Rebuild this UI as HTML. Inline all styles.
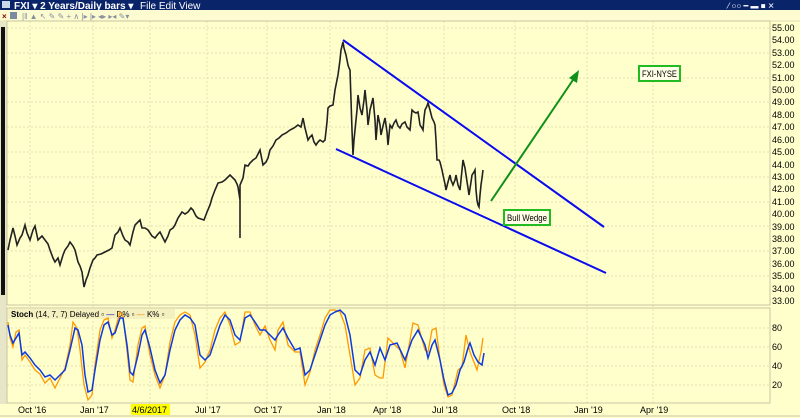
<!DOCTYPE html>
<html><head><meta charset="utf-8"><style>
html,body{margin:0;padding:0;width:800px;height:418px;overflow:hidden;background:#ffffcc;font-family:"Liberation Sans",sans-serif;}
</style></head><body>
<svg width="800" height="418" xmlns="http://www.w3.org/2000/svg" style="position:absolute;left:0;top:0" font-family="Liberation Sans, sans-serif">
<rect x="0" y="0" width="800" height="418" fill="#ffffcc"/>
<rect x="0" y="0" width="800" height="10" fill="#0a246a"/>
<rect x="2" y="1" width="8" height="7" fill="#c8d8e8"/>
<text x="14" y="9" font-size="10" fill="#fff" font-weight="bold">FXI ▾  2 Years/Daily bars ▾</text>
<text x="140" y="9" font-size="10" fill="#fff">File  Edit  View</text>
<text x="728" y="8.5" font-size="8" fill="#fff">⁄ ○○ ━ ▬ ■ ✕</text>
<rect x="0" y="10" width="800" height="11" fill="#fdfbd0"/>
<text x="2" y="19" font-size="8" fill="#880000" font-weight="bold">×</text>
<rect x="10" y="12" width="7" height="7" fill="#7a8aa0"/>
<text x="22" y="19" font-size="8" fill="#8890a0">|‖ ▲ ↖ ✎ ✎ + ∧ |▸ |▸ ◂▸ ▸◂ ✎▾</text>
<line x1="0" y1="21" x2="800" y2="21" stroke="#e0dcb0"/>
<rect x="0" y="21" width="7" height="397" fill="#e8e6c8"/>
<rect x="1" y="27" width="4" height="268" fill="#111"/>
<g stroke="#e4e0b4" stroke-dasharray="2,2" stroke-width="1">
<line x1="7" y1="28" x2="770" y2="28"/><line x1="7" y1="53" x2="770" y2="53"/><line x1="7" y1="78" x2="770" y2="78"/><line x1="7" y1="102" x2="770" y2="102"/><line x1="7" y1="127" x2="770" y2="127"/><line x1="7" y1="152" x2="770" y2="152"/><line x1="7" y1="177" x2="770" y2="177"/><line x1="7" y1="202" x2="770" y2="202"/><line x1="7" y1="226" x2="770" y2="226"/><line x1="7" y1="251" x2="770" y2="251"/><line x1="7" y1="276" x2="770" y2="276"/>
<line x1="30" y1="21" x2="30" y2="403"/><line x1="93" y1="21" x2="93" y2="403"/><line x1="150" y1="21" x2="150" y2="403"/><line x1="207" y1="21" x2="207" y2="403"/><line x1="267" y1="21" x2="267" y2="403"/><line x1="330" y1="21" x2="330" y2="403"/><line x1="387" y1="21" x2="387" y2="403"/><line x1="444" y1="21" x2="444" y2="403"/><line x1="515" y1="21" x2="515" y2="403"/><line x1="587" y1="21" x2="587" y2="403"/><line x1="653" y1="21" x2="653" y2="403"/>
<line x1="7" y1="328" x2="770" y2="328"/><line x1="7" y1="347" x2="770" y2="347"/><line x1="7" y1="366" x2="770" y2="366"/><line x1="7" y1="385" x2="770" y2="385"/>
</g>
<rect x="7" y="21" width="763" height="284" fill="none" stroke="#c8c4a0"/>
<rect x="7" y="308" width="763" height="95" fill="none" stroke="#c8c4a0"/>
<rect x="0" y="404" width="800" height="14" fill="#ffffcc"/>
<line x1="0" y1="416" x2="800" y2="416" stroke="#c8c4a0"/>
<g font-size="9" fill="#000">
<text x="772" y="31">55.00</text><text x="772" y="43">54.00</text><text x="772" y="56">53.00</text><text x="772" y="68">52.00</text><text x="772" y="81">51.00</text><text x="772" y="93">50.00</text><text x="772" y="105">49.00</text><text x="772" y="118">48.00</text><text x="772" y="130">47.00</text><text x="772" y="143">46.00</text><text x="772" y="155">45.00</text><text x="772" y="168">44.00</text><text x="772" y="180">43.00</text><text x="772" y="192">42.00</text><text x="772" y="205">41.00</text><text x="772" y="217">40.00</text><text x="772" y="230">39.00</text><text x="772" y="242">38.00</text><text x="772" y="254">37.00</text><text x="772" y="267">36.00</text><text x="772" y="279">35.00</text><text x="772" y="292">34.00</text><text x="772" y="304">33.00</text>
<text x="772" y="331">80</text><text x="772" y="350">60</text><text x="772" y="369">40</text><text x="772" y="388">20</text>
<text x="18" y="413">Oct '16</text><text x="80" y="413">Jan '17</text>
<rect x="131" y="404" width="39" height="11" fill="#ffff00"/><text x="132" y="413">4/6/2017</text>
<text x="195" y="413">Jul '17</text><text x="254" y="413">Oct '17</text><text x="317" y="413">Jan '18</text><text x="373" y="413">Apr '18</text><text x="432" y="413">Jul '18</text><text x="502" y="413">Oct '18</text><text x="574" y="413">Jan '19</text><text x="640" y="413">Apr '19</text>
</g>
<polyline fill="none" stroke="#222" stroke-width="1.6" points="8,250 10,240 13,228 15,236 17,245 20,238 22,235 25,225 27,233 30,240 33,230 35,226 38,240 42,236 45,240 48,244 50,250 53,258 55,262 58,258 60,265 63,255 65,250 68,246 70,242 73,246 75,250 78,262 80,266 82,272 84,287 86,280 88,275 90,268 93,260 95,258 97,255 101,254 105,252 109,250 112,248 115,235 118,232 120,228 123,236 125,240 128,242 130,245 133,232 135,225 138,222 140,220 142,228 145,228 148,230 152,236 155,238 158,234 160,232 163,238 165,242 168,236 170,230 173,228 175,225 178,218 182,212 185,214 188,212 191,208 193,210 196,216 198,218 201,219 204,220 207,212 210,205 212,198 215,190 218,183 222,182 225,180 228,177 230,175 233,178 235,180 237,184 238,187 240,200 240,238 240,185 243,178 245,165 248,166 250,163 253,160 256,158 258,154 260,150 262,160 263,165 266,162 268,158 270,150 273,146 276,140 279,138 282,135 286,133 290,130 294,128 298,125 301,127 303,118 305,128 308,140 310,137 312,135 314,142 316,145 318,142 320,140 323,142 325,140 327,122 328,108 330,106 333,105 335,90 338,75 340,60 341,50 343,42 344,48 346,55 347,60 348,65 349,68 350,70 351,100 352,130 353,155 354,140 355,130 357,110 358,95 360,108 362,115 364,100 365,90 367,110 368,125 369,118 370,110 372,102 373,98 375,120 376,140 377,128 378,115 380,125 381,135 383,126 385,118 387,132 388,145 389,135 390,125 392,128 394,123 396,120 398,126 400,128 402,124 405,122 407,127 410,130 411,120 412,110 414,112 416,113 418,112 419,118 420,125 422,128 423,130 424,118 425,110 427,106 428,103 430,110 432,118 434,122 435,125 436,140 437,160 439,160 440,162 442,170 443,175 445,184 446,190 448,182 450,175 451,180 453,185 455,180 456,175 458,185 460,190 462,170 463,160 465,168 466,175 468,188 469,195 471,182 472,175 474,172 475,170 476,190 477,200 478,205 479,207 480,195 481,185 482,178 483,170"/>
<line x1="343" y1="40" x2="604" y2="227" stroke="#0a0aee" stroke-width="2"/>
<line x1="336" y1="149" x2="606" y2="273" stroke="#0a0aee" stroke-width="2"/>
<line x1="491" y1="201" x2="575" y2="77" stroke="#10901a" stroke-width="2"/>
<polygon points="579,70 569,78 577,83" fill="#10901a"/>
<rect x="504" y="210" width="46" height="15" fill="#ffffe8" stroke="#22bb22" stroke-width="2"/>
<text x="507" y="221" font-size="9" fill="#000" textLength="40" lengthAdjust="spacingAndGlyphs">Bull Wedge</text>
<rect x="639" y="66" width="41" height="15" fill="#ffffe8" stroke="#22bb22" stroke-width="2"/>
<text x="642" y="77" font-size="9" fill="#000" textLength="35" lengthAdjust="spacingAndGlyphs">FXI-NYSE</text>
<rect x="8" y="309" width="167" height="10" fill="#f4f0c0"/>
<text x="11" y="317" font-size="8" fill="#000"><tspan font-weight="bold">Stoch</tspan>  (14, 7, 7) Delayed ▫  <tspan fill="#0000cc">—</tspan> D% ▫  <tspan fill="#ff8800">—</tspan> K% ▫</text>
<polyline fill="none" stroke="#ff9900" stroke-width="1.3" points="8,322 10,338 13,347 16,332 19,330 22,360 25,355 30,362 35,370 40,374 45,383 50,378 55,388 60,378 65,368 70,345 73,322 77,328 80,350 84,385 88,400 92,395 95,365 100,330 104,320 108,318 112,338 115,330 120,312 123,316 127,350 130,380 133,382 138,345 142,328 145,326 150,355 155,375 160,388 165,375 170,342 175,322 180,315 185,312 190,315 195,335 200,368 205,362 210,350 215,330 220,318 225,312 230,325 235,345 240,342 245,312 250,312 255,325 260,335 265,326 270,340 275,350 278,330 283,322 288,345 295,352 300,352 305,385 310,372 315,350 320,335 325,318 330,310 335,310 340,312 345,325 350,355 355,385 360,378 365,350 370,348 375,375 380,378 383,378 388,338 395,345 400,350 405,368 410,340 413,323 418,325 425,350 428,352 432,330 436,328 440,360 444,385 448,397 452,395 458,370 462,367 466,335 470,352 477,370 481,352 483,338"/>
<polyline fill="none" stroke="#0a3ae0" stroke-width="1.5" points="8,325 10,335 13,343 16,338 19,333 22,355 25,352 30,358 35,365 40,370 45,377 50,375 55,380 60,375 65,370 70,350 75,328 78,330 82,345 85,375 88,392 92,390 95,370 100,340 104,325 108,322 112,335 115,333 120,318 123,318 127,345 130,372 133,375 138,355 142,335 145,330 150,348 155,370 160,383 165,375 170,350 175,330 180,320 185,315 190,318 195,325 200,355 205,360 210,355 215,340 220,325 225,315 230,320 235,335 240,340 245,318 250,315 255,322 260,330 265,330 270,335 275,340 278,335 283,328 288,338 295,350 300,348 305,375 310,370 315,355 320,340 325,325 330,315 335,312 340,310 345,315 350,335 355,370 360,375 365,360 370,352 375,365 380,348 385,360 390,345 397,343 405,360 412,340 418,330 425,345 428,358 432,345 435,340 440,360 444,380 448,395 452,393 456,385 460,370 464,362 468,348 470,343 474,355 478,362 482,365 484,353"/>
</svg>
</body></html>
